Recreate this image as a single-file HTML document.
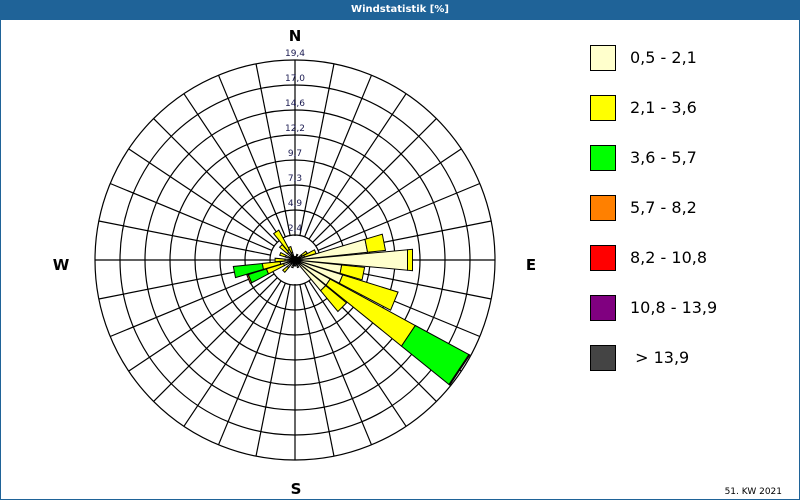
<!DOCTYPE html>
<html><head><meta charset="utf-8"><style>
body{margin:0;width:800px;height:500px;overflow:hidden;background:#fff;font-family:"Liberation Sans",sans-serif}
#t{position:absolute;left:0;top:0;width:800px;height:20px;background:#1f6398;color:#fff;font:bold 10px "DejaVu Sans",sans-serif;text-align:center;line-height:19px}
#f{position:absolute;left:0;top:20px;width:798px;height:479px;border:1px solid #1f6398;border-top:0}
svg{position:absolute;left:0;top:0}
.lg{position:absolute;left:590px;width:24px;height:24px;border:1px solid #000}
.lt{position:absolute;left:630px;font:16px "DejaVu Sans",sans-serif;color:#000}
</style></head><body>
<div id="t">Windstatistik [%]</div>
<div id="f"></div>
<svg id="s" width="800" height="500" xmlns="http://www.w3.org/2000/svg"></svg>
<div class="lg" style="top:45px;background:#ffffcc"></div><div class="lt" style="top:48px">0,5 - 2,1</div>
<div class="lg" style="top:95px;background:#ffff00"></div><div class="lt" style="top:98px">2,1 - 3,6</div>
<div class="lg" style="top:145px;background:#00ff00"></div><div class="lt" style="top:148px">3,6 - 5,7</div>
<div class="lg" style="top:195px;background:#ff8000"></div><div class="lt" style="top:198px">5,7 - 8,2</div>
<div class="lg" style="top:245px;background:#ff0000"></div><div class="lt" style="top:248px">8,2 - 10,8</div>
<div class="lg" style="top:295px;background:#800080"></div><div class="lt" style="top:298px">10,8 - 13,9</div>
<div class="lg" style="top:345px;background:#444"></div><div class="lt" style="top:348px">&nbsp;&gt; 13,9</div>
<script>
var s=document.getElementById('s'),cx=295,cy=260,h='';
function P(b,r){var a=b*Math.PI/180;return (cx+r*Math.sin(a)).toFixed(1)+','+(cy-r*Math.cos(a)).toFixed(1);}
for(var i=1;i<=8;i++)h+='<circle cx="'+cx+'" cy="'+cy+'" r="'+(i*25)+'" fill="none" stroke="#000" stroke-width="1.2"/>';
for(var k=0;k<32;k++){var b=k*11.25;var r0=(k%8==0)?0:25;var a=P(b,r0).split(','),c=P(b,200).split(',');h+='<line x1="'+a[0]+'" y1="'+a[1]+'" x2="'+c[0]+'" y2="'+c[1]+'" stroke="#000" stroke-width="1.2"/>';}
h+='<circle cx="'+cx+'" cy="'+cy+'" r="24" fill="#fff"/>';
h+='<line x1="'+(cx-25)+'" y1="'+cy+'" x2="'+(cx+25)+'" y2="'+cy+'" stroke="#000"/>';
var C=['#ffffcc','#ffff00','#00ff00','#ff8000'];
var bars=[[78.75,[73,91]],[90,[113,118]],[101.25,[47,70]],[112.5,[50,108]],[123.75,[40,137,198,199]],[135,[40,67]],
[258.75,[15,33,62]],[247.5,[12,30,49,50.5]],[326.25,[12,34]],[315,[10,20]],[67.5,[10,22]],[56,[8,14]],[180,[6]],[200,[8]],[225,[10,16]],[270,[10,20]],[292.5,[10,16]],[337.5,[8,14]],[22.5,[6]],[157.5,[8]]];
var w=5.2;
bars.forEach(function(x){var b=x[0],rs=x[1],prev=0;rs.forEach(function(r,j){h+='<polygon points="'+P(b-w,prev)+' '+P(b-w,r)+' '+P(b+w,r)+' '+P(b+w,prev)+'" fill="'+C[j]+'" stroke="#000" stroke-width="1"/>';prev=r;});});
h+='<circle cx="'+cx+'" cy="'+cy+'" r="4" fill="#000"/>';
var L=['2,4','4,9','7,3','9,7','12,2','14,6','17,0','19,4'];
for(var i=0;i<8;i++)h+='<text x="'+(cx)+'" y="'+(cy-(i+1)*25-4)+'" text-anchor="middle" font-family="DejaVu Sans" font-size="9" fill="#1a1a50">'+L[i]+'</text>';
h+='<g font-family="DejaVu Sans" font-weight="bold" font-size="15" text-anchor="middle"><text x="295" y="41">N</text><text x="296" y="494">S</text><text x="61" y="270">W</text><text x="531" y="270">E</text></g>';
h+='<text x="782" y="494" text-anchor="end" font-family="DejaVu Sans" font-size="9">51. KW 2021</text>';
s.innerHTML=h;
</script>
</body></html>
